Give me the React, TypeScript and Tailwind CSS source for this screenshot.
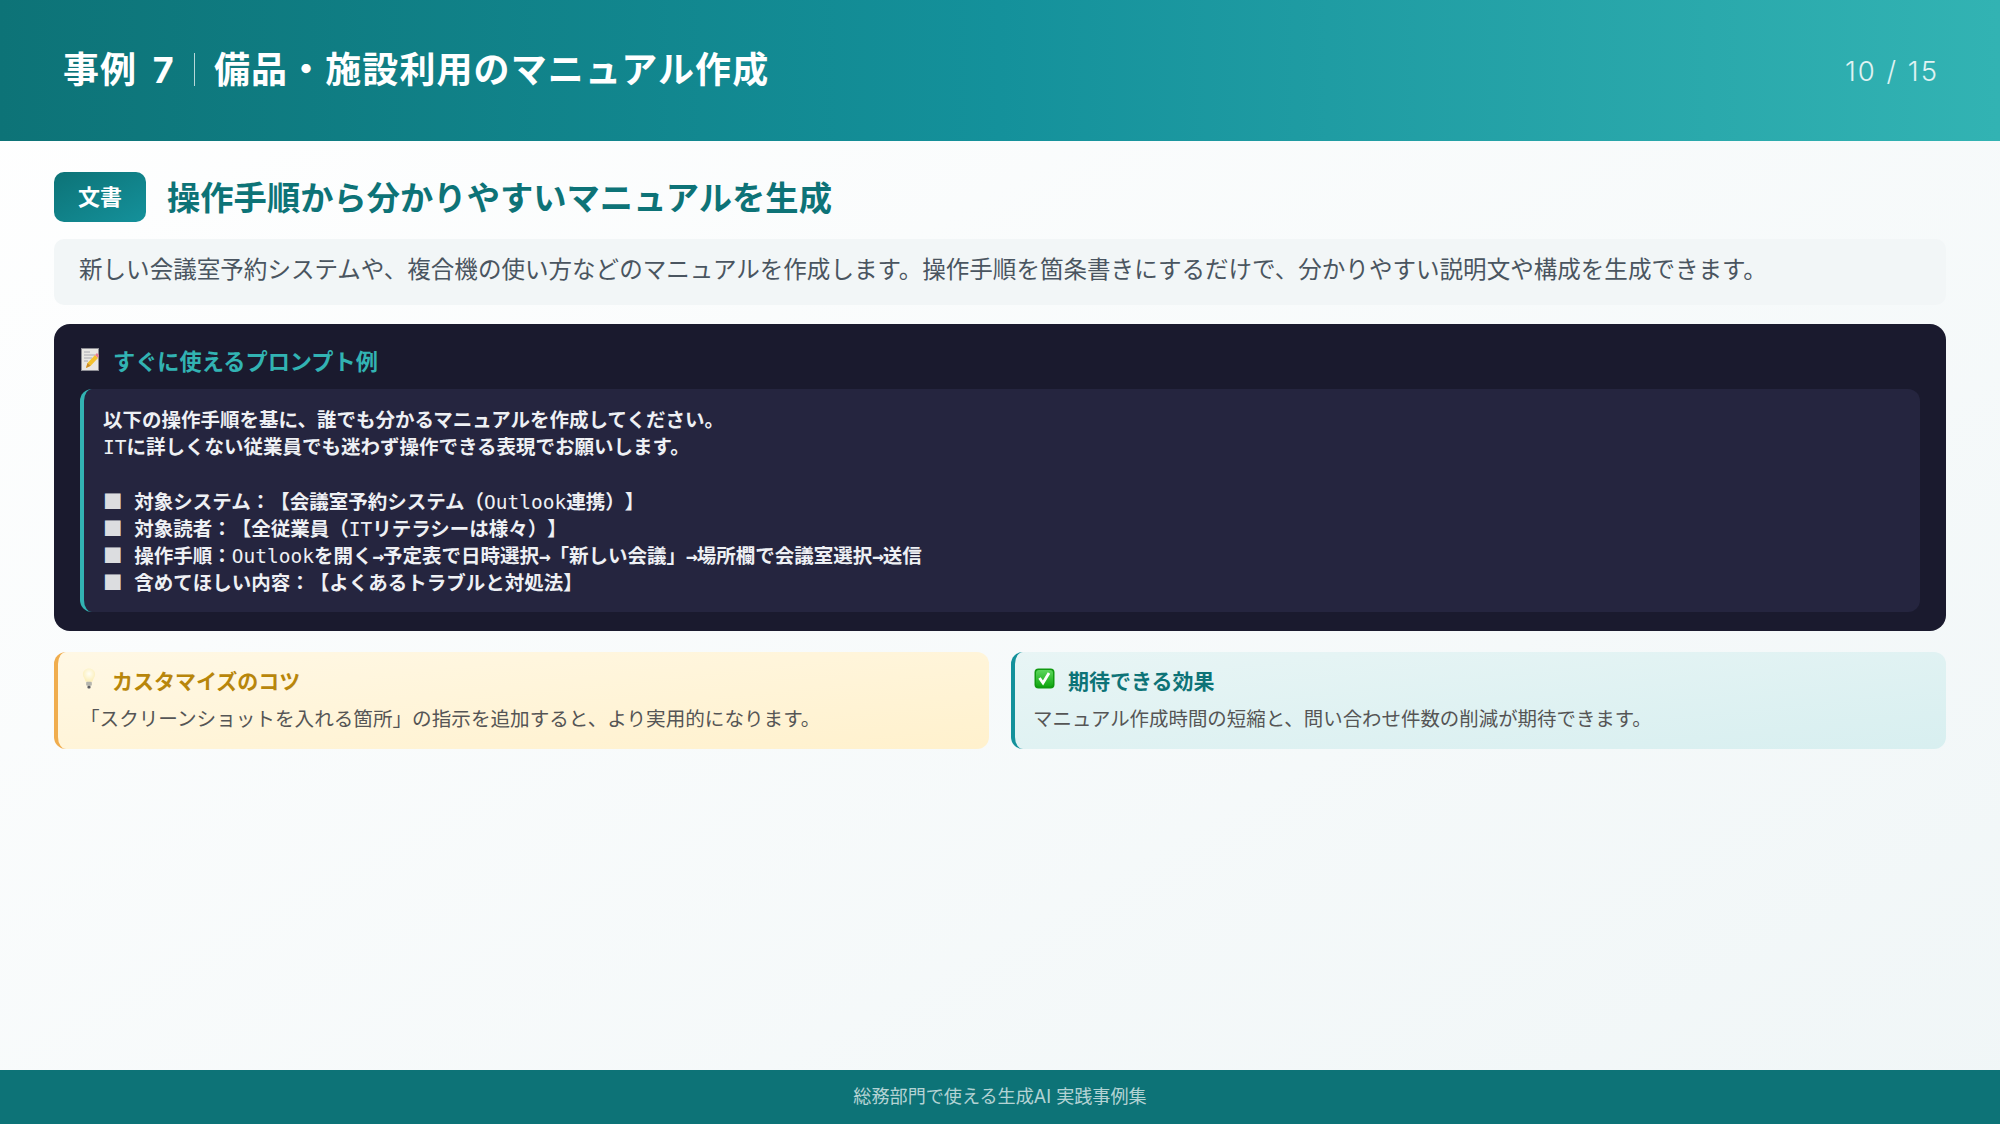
const sans = "font-['Inter','Noto_Sans_CJK_JP',sans-serif]";

const MemoIcon = () => (
    <svg width="18" height="23" viewBox="0 0 18 23" className="ml-px mt-[3px] shrink-0">
        <rect x="0.500" y="0.500" width="17" height="22" fill="#e9e7e3" stroke="#8d8d94" />
        <path d="M3 4h6M3 7h11M3 10h8M3 13h4" stroke="#a8a8b0" strokeWidth="1" />
        <path d="M5 20l1.500-5 7.500-8 3 3-7.500 8z" fill="#f3c12e" />
        <path d="M5 20l1.500-5 3 2.800z" fill="#c98a2a" />
        <path d="M14 7l2-2 2 2.500-1 2.500z" fill="#e57f92" />
    </svg>
);

const BulbIcon = () => (
    <span className="-mt-[8px] flex w-[18px] shrink-0 justify-center">
        <svg width="14" height="21" viewBox="0 0 13 20">
            <defs>
                <radialGradient id="bulb" cx="50%" cy="40%" r="60%">
                    <stop offset="0%" stopColor="#fffef6" />
                    <stop offset="100%" stopColor="#fbeeb6" />
                </radialGradient>
            </defs>
            <path
                d="M6.500 0.500c3.300 0 5.800 2.400 5.800 5.400 0 2.600-2 4.200-2.700 7.100H3.400C2.700 10.100 0.700 8.500 0.700 5.900 0.700 2.900 3.200 0.500 6.500 0.500z"
                fill="url(#bulb)"
            />
            <rect x="3.800" y="13" width="5.400" height="4" rx="1" fill="#b4b4ad" />
            <rect x="5" y="17" width="3" height="2.500" rx="1" fill="#5c5d62" />
        </svg>
    </span>
);

const CheckIcon = () => (
    <svg width="21" height="21" viewBox="0 0 21 21" className="-mt-[7px] ml-px shrink-0">
        <defs>
            <linearGradient id="check" x1="0" y1="0" x2="0" y2="1">
                <stop offset="0%" stopColor="#5cd65c" />
                <stop offset="100%" stopColor="#12a812" />
            </linearGradient>
        </defs>
        <rect x="0.500" y="0.500" width="20" height="20" rx="4" fill="#109a10" />
        <rect x="2" y="2" width="17" height="16.500" rx="3" fill="url(#check)" />
        <path d="M5.500 10l3.500 5 6-10" fill="none" stroke="#fff" strokeWidth="2.800" />
    </svg>
);

const promptLines = [
    "以下の操作手順を基に、誰でも分かるマニュアルを作成してください。",
    "ITに詳しくない従業員でも迷わず操作できる表現でお願いします。",
    "",
    "■ 対象システム：【会議室予約システム（Outlook連携）】",
    "■ 対象読者：【全従業員（ITリテラシーは様々）】",
    "■ 操作手順：Outlookを開く→予定表で日時選択→「新しい会議」→場所欄で会議室選択→送信",
    "■ 含めてほしい内容：【よくあるトラブルと対処法】",
];

const PromptLine = ({ line }: { line: string }) => {
    if (!line) return <div className="h-[26px]" />;
    const bullet = line.startsWith("■");
    const parts = (bullet ? line.slice(1) : line).split(/([A-Za-z]+|→)/);
    return (
        <div className="h-[27px] whitespace-pre font-['DejaVu_Sans_Mono','Noto_Sans_CJK_JP',monospace] text-[19.500px] font-bold leading-[27px] text-[#eef0f4] [text-spacing-trim:space-all]">
            {bullet && <span className="font-['Noto_Sans_CJK_JP',sans-serif] font-normal text-[#dcdde0]">■</span>}
            {parts.map((part, i) =>
                part === "→" ? (
                    <span key={i} className="tracking-[-1.200px]">{part}</span>
                ) : /^[A-Za-z]+$/.test(part) ? (
                    <span key={i} className="font-normal">{part}</span>
                ) : (
                    part
                )
            )}
        </div>
    );
};

export default function App() {
    return (
        <div className={`${sans} flex h-[1124px] w-[2000px] flex-col overflow-hidden bg-gradient-to-br from-white to-[#f0f6f7]`}>
            <header className="flex h-[141px] shrink-0 items-center justify-between bg-gradient-to-r from-[#0d7377] via-[#14919b] to-[#32b3b3] pb-[2px] pl-[63px] pr-[61px]">
                <h1 className="flex items-center text-[36px] font-bold tracking-[1.100px] text-white">
                    <span className="[word-spacing:6px]">事例 7</span>
                    <span className="mx-[19px] h-[33px] w-px bg-white/70" />
                    <span>備品・施設利用のマニュアル作成</span>
                </h1>
                <span className="pt-[5px] text-[27.500px] font-light tracking-[2px] text-white/85">10 / 15</span>
            </header>

            <main className="flex flex-1 flex-col px-[54px] pt-[31px]">
                <div className="flex h-[50px] items-center gap-[21px]">
                    <span className="flex h-[50px] w-[92px] items-center justify-center rounded-[10px] bg-gradient-to-br from-[#0d7377] to-[#14919b] pt-[1px] text-[22px] font-bold text-white">文書</span>
                    <h2 className="pt-[1px] text-[33.300px] font-bold leading-[50px] text-[#0d7377]">操作手順から分かりやすいマニュアルを生成</h2>
                </div>

                <p className="mt-[17px] flex h-[66px] items-center rounded-[10px] bg-[#f2f6f7] px-[25px] pb-[5px] text-[23.550px] text-[#4a5560]">
                    新しい会議室予約システムや、複合機の使い方などのマニュアルを作成します。操作手順を箇条書きにするだけで、分かりやすい説明文や構成を生成できます。
                </p>

                <section className="mt-[19px] flex h-[307px] flex-col rounded-[16px] bg-[#1a1a2e] px-[26px] pb-[19px] pt-[21px]">
                    <div className="flex h-[44px] items-start gap-[14px] text-[22.200px] font-bold text-[#32b3b3]">
                        <MemoIcon />
                        <span className="leading-[34px]">すぐに使えるプロンプト例</span>
                    </div>
                    <div className="flex-1 rounded-[12px] border-l-4 border-[#32b3b3] bg-[#25253f] pl-[19px] pt-[18px]">
                        {promptLines.map((line, i) => (
                            <PromptLine key={i} line={line} />
                        ))}
                    </div>
                </section>

                <div className="mt-[21px] grid grid-cols-2 gap-[22px]">
                    <div className="h-[97px] rounded-[12px] border-l-4 border-[#f0ad4e] bg-gradient-to-br from-[#fff8e5] to-[#fff1cd] pl-[22px] pt-[13px]">
                        <div className="flex h-[34px] items-center gap-[14px] text-[21px] font-bold text-[#b8860b]">
                            <BulbIcon />
                            <span>カスタマイズのコツ</span>
                        </div>
                        <p className="mt-[6px] text-[19.600px] text-[#555]">「スクリーンショットを入れる箇所」の指示を追加すると、より実用的になります。</p>
                    </div>
                    <div className="h-[97px] rounded-[12px] border-l-4 border-[#14919b] bg-gradient-to-br from-[#e8f5f5] to-[#d8eff0] pl-[18px] pt-[13px]">
                        <div className="flex h-[34px] items-center gap-[13px] text-[21px] font-bold text-[#0d7377]">
                            <CheckIcon />
                            <span>期待できる効果</span>
                        </div>
                        <p className="mt-[6px] text-[19.450px] text-[#555]">マニュアル作成時間の短縮と、問い合わせ件数の削減が期待できます。</p>
                    </div>
                </div>
            </main>

            <footer className="flex h-[54px] shrink-0 items-center justify-center bg-[#0d7377] text-[18.100px] text-white/70">
                総務部門で使える生成AI 実践事例集
            </footer>
        </div>
    );
}
